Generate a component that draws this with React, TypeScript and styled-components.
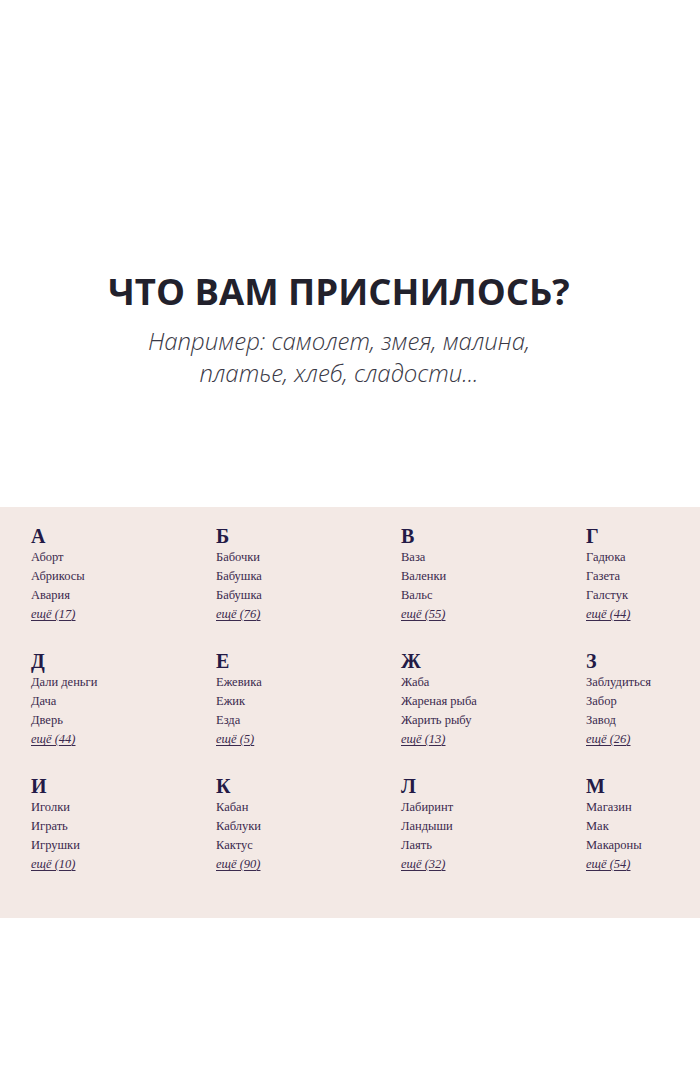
import React from "react"
import styled, { createGlobalStyle } from "styled-components"

const GlobalStyle = createGlobalStyle`
	html, body {
		margin: 0;
		padding: 0;
		background: #ffffff;
	}
`

type Group = {
	letter: string
	words: string[]
	more: number
}

const groups: Group[] = [
	{ letter: "А", words: ["Аборт", "Абрикосы", "Авария"], more: 17 },
	{ letter: "Б", words: ["Бабочки", "Бабушка", "Бабушка"], more: 76 },
	{ letter: "В", words: ["Ваза", "Валенки", "Вальс"], more: 55 },
	{ letter: "Г", words: ["Гадюка", "Газета", "Галстук"], more: 44 },
	{ letter: "Д", words: ["Дали деньги", "Дача", "Дверь"], more: 44 },
	{ letter: "Е", words: ["Ежевика", "Ежик", "Езда"], more: 5 },
	{ letter: "Ж", words: ["Жаба", "Жареная рыба", "Жарить рыбу"], more: 13 },
	{ letter: "З", words: ["Заблудиться", "Забор", "Завод"], more: 26 },
	{ letter: "И", words: ["Иголки", "Играть", "Игрушки"], more: 10 },
	{ letter: "К", words: ["Кабан", "Каблуки", "Кактус"], more: 90 },
	{ letter: "Л", words: ["Лабиринт", "Ландыши", "Лаять"], more: 32 },
	{ letter: "М", words: ["Магазин", "Мак", "Макароны"], more: 54 },
]

const App = () => {
	return (
		<>
			<GlobalStyle />
			<Page>
				<Hero>
					<Title>ЧТО ВАМ ПРИСНИЛОСЬ?</Title>
					<Subtitle>
						Например: самолет, змея, малина,
						<br />
						платье, хлеб, сладости...
					</Subtitle>
				</Hero>
				<Dictionary>
					<Grid>
						{groups.map((g) => (
							<Block key={g.letter}>
								<Letter>{g.letter}</Letter>
								{g.words.map((w, i) => (
									<Word key={i} href="#">
										{w}
									</Word>
								))}
								<More href="#">ещё ({g.more})</More>
							</Block>
						))}
					</Grid>
				</Dictionary>
			</Page>
		</>
	)
}

const Page = styled.div`
	width: 700px;
	min-height: 1074px;
	background: #ffffff;
`

const Hero = styled.header`
	padding: 269px 22px 118px 0;
	text-align: center;
`

const Title = styled.h1`
	margin: 0 0 12px;
	font-family: "Open Sans", sans-serif;
	font-weight: 700;
	font-size: 36.5px;
	line-height: 44px;
	color: #22212c;
`

const Subtitle = styled.p`
	margin: 0;
	font-family: "Open Sans", sans-serif;
	font-weight: 300;
	font-style: italic;
	font-size: 24px;
	line-height: 32px;
	color: #3a3946;
`

const Dictionary = styled.section`
	background: #f3e9e5;
	padding: 17px 0 44px 31px;
`

const Grid = styled.div`
	display: grid;
	grid-template-columns: repeat(3, 185px) 1fr;
	row-gap: 25px;
`

const Block = styled.div`
	display: flex;
	flex-direction: column;
	align-items: flex-start;
`

const Letter = styled.h3`
	margin: 0;
	font-family: "Liberation Serif", serif;
	font-weight: 700;
	font-size: 20px;
	line-height: 24px;
	color: #231a46;
`

const Word = styled.a`
	font-family: "Liberation Serif", serif;
	font-size: 12.5px;
	line-height: 19px;
	color: #3b2a4e;
	text-decoration: none;
`

const More = styled(Word)`
	font-style: italic;
	text-decoration: underline;
	text-underline-offset: 2px;
`

export default App
